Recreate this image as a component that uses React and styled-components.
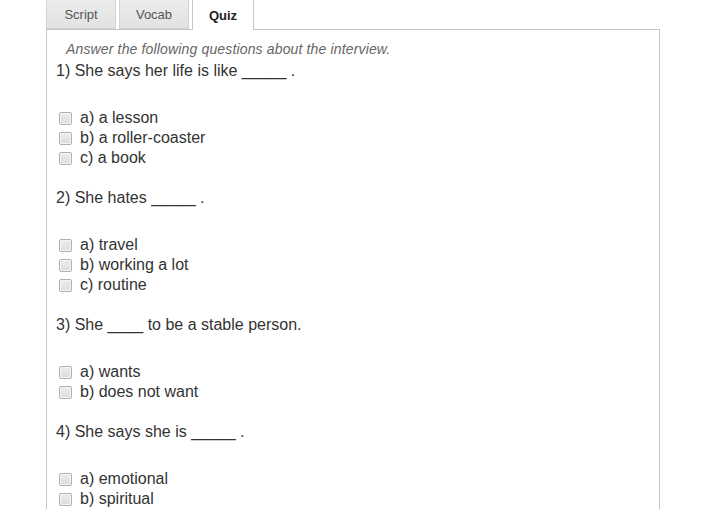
import React from "react";
import styled, { createGlobalStyle } from "styled-components";

const Global = createGlobalStyle`
  body {
    margin: 0;
    background: #fff;
    font-family: "Liberation Sans", Arial, sans-serif;
  }
`;

const Page = styled.div`
  padding-left: 46px;
  width: 614px;
  margin-top: -3px;
`;

const TabBar = styled.div`
  display: flex;
  gap: 3px;
  position: relative;
  z-index: 1;
  margin-bottom: -1px;
`;

const Tab = styled.div`
  box-sizing: border-box;
  width: ${(p) => p.w}px;
  height: ${(p) => (p.active ? 33 : 32)}px;
  padding-top: 3px;
  display: flex;
  align-items: center;
  justify-content: center;
  font-size: 13px;
  border: 1px solid ${(p) => (p.active ? "#c5c5c5" : "#d3d3d3")};
  border-bottom: ${(p) => (p.active ? "none" : "1px solid #d3d3d3")};
  background: ${(p) =>
    p.active ? "#fff" : "linear-gradient(#ededed, #e2e2e2)"};
  color: ${(p) => (p.active ? "#212121" : "#555")};
  font-weight: ${(p) => (p.active ? "bold" : "normal")};
`;

const Panel = styled.div`
  border: 1px solid #c5c5c5;
  border-bottom: none;
  padding: 10px 0 0 9px;
  color: #333;
`;

const Intro = styled.div`
  font-style: italic;
  font-size: 14px;
  line-height: 18px;
  color: #666;
  padding-left: 10px;
  margin-bottom: 3px;
  letter-spacing: 0.15px;
`;

const Question = styled.div`
  font-size: 16px;
  line-height: 20px;
  margin-bottom: 27px;
`;

const Options = styled.div`
  display: flex;
  flex-direction: column;
  margin-bottom: 20px;
`;

const Option = styled.label`
  display: flex;
  align-items: center;
  height: 20px;
  font-size: 16px;
`;

const Box = styled.span`
  box-sizing: border-box;
  width: 13px;
  height: 13px;
  margin: 0 8px 0 3px;
  border: 1px solid #b0b0b0;
  border-radius: 2px;
  background: linear-gradient(#ececec, #dcdcdc);
  box-shadow: inset 0 0 0 1px #f6f6f6;
`;

const quiz = [
  {
    q: "1) She says her life is like _____ .",
    opts: ["a) a lesson", "b) a roller-coaster", "c) a book"],
  },
  { q: "2) She hates _____ .", opts: ["a) travel", "b) working a lot", "c) routine"] },
  { q: "3) She ____ to be a stable person.", opts: ["a) wants", "b) does not want"] },
  { q: "4) She says she is _____ .", opts: ["a) emotional", "b) spiritual"] },
];

export default function App() {
  return (
    <Page>
      <Global />
      <TabBar>
        <Tab w={70}>Script</Tab>
        <Tab w={70}>Vocab</Tab>
        <Tab w={62} active>
          Quiz
        </Tab>
      </TabBar>
      <Panel>
        <Intro>Answer the following questions about the interview.</Intro>
        {quiz.map((item) => (
          <div key={item.q}>
            <Question>{item.q}</Question>
            <Options>
              {item.opts.map((o) => (
                <Option key={o}>
                  <Box />
                  {o}
                </Option>
              ))}
            </Options>
          </div>
        ))}
      </Panel>
    </Page>
  );
}
